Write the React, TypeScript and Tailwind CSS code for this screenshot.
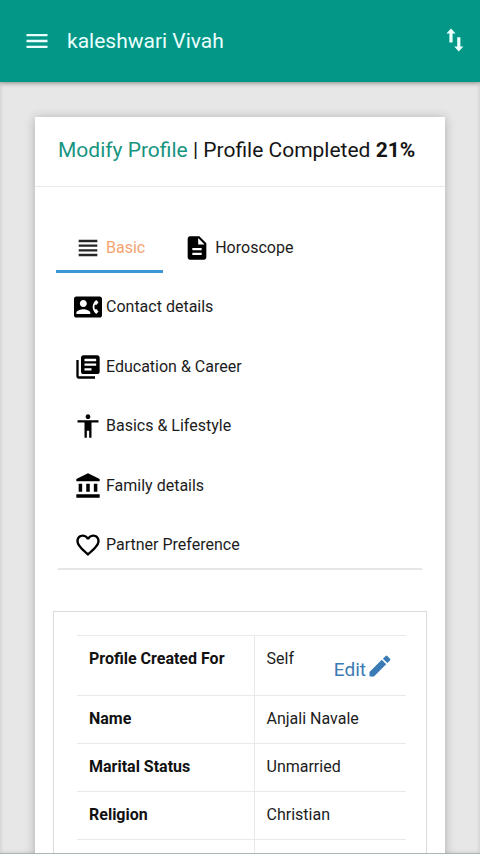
import React from 'react';
import clsx from 'clsx';
import type { IconType } from 'react-icons';
import {
  MdAccessibility,
  MdAccountBalance,
  MdContactPhone,
  MdDescription,
  MdFavoriteBorder,
  MdLibraryBooks,
  MdMenu,
  MdViewHeadline,
} from 'react-icons/md';

type Tab = {
  label: string;
  icon: IconType;
};

const tabs: Tab[] = [
  { label: 'Basic', icon: MdViewHeadline },
  { label: 'Horoscope', icon: MdDescription },
  { label: 'Contact details', icon: MdContactPhone },
  { label: 'Education & Career', icon: MdLibraryBooks },
  { label: 'Basics & Lifestyle', icon: MdAccessibility },
  { label: 'Family details', icon: MdAccountBalance },
  { label: 'Partner Preference', icon: MdFavoriteBorder },
];

const details = [
  { label: 'Profile Created For', value: 'Self', editable: true },
  { label: 'Name', value: 'Anjali Navale' },
  { label: 'Marital Status', value: 'Unmarried' },
  { label: 'Religion', value: 'Christian' },
  { label: '', value: '' },
];

function SortIcon() {
  return (
    <svg width="18" height="24" viewBox="0 0 18 24" fill="currentColor">
      <path d="M5 .5 9.6 5.6H6.6V14.4H3.4V5.6H.4z" />
      <path d="M12.8 23.5 8.2 18.4H11.2V9.2H14.4V18.4H17.4z" />
    </svg>
  );
}

function PencilIcon() {
  return (
    <svg width="28" height="28" viewBox="0 0 24 24" fill="currentColor">
      <path d="M3 17.2V20.4q0 .6.6.6H6.8L17.3 10.5 13.5 6.7z" />
      <path d="M18.3 9.5 20.6 7.2q.7-.7 0-1.4L18.2 3.4q-.7-.7-1.4 0L14.5 5.7z" />
    </svg>
  );
}

function AppBar() {
  return (
    <header className="z-10 flex h-[82px] shrink-0 items-center bg-[#039788] pr-4 pl-[23px] text-[#e9fffc] shadow-[0_1px_5px_rgba(0,0,0,0.35)]">
      <button type="button" aria-label="Open menu">
        <MdMenu size={28} />
      </button>
      <h1 className="ml-4 flex-1 text-[21px] leading-7">kaleshwari Vivah</h1>
      <button type="button" aria-label="Sort" className="pb-0.5">
        <SortIcon />
      </button>
    </header>
  );
}

function ProfileTabs() {
  return (
    <nav className="mx-[23px] mt-[26px] border-b-2 border-[#e6e6e6]">
      <ul className="-mx-0.5 -mb-0.5 flex h-[357px] flex-wrap items-end gap-x-0.5 pr-10">
        {tabs.map(({ label, icon: Icon }, index) => (
          <li key={label}>
            <a
              href="#"
              aria-current={index === 0 ? 'page' : undefined}
              className={clsx(
                'flex items-center gap-1 border-b-3 px-[18px] pb-2 text-base leading-7',
                index === 0
                  ? 'border-[#3d97d6] text-[#f4a373]'
                  : 'border-transparent text-[#1c1c1c]',
              )}
            >
              <Icon
                size={28}
                className={index === 0 ? 'text-[#262626]' : 'text-black'}
              />
              {label}
            </a>
          </li>
        ))}
      </ul>
    </nav>
  );
}

function DetailsTable() {
  return (
    <div className="mx-[18px] mt-[41px] border border-[#d9dcdb] py-[23px] pr-5 pl-[23px]">
      <table className="w-full border-collapse text-left text-base leading-6 text-[#1c1c1c]">
        <tbody>
          {details.map(({ label, value, editable }, index) => (
            <tr
              key={index}
              className={clsx(
                'border-t border-[#e9e9e9] align-top',
                editable ? 'h-[60px]' : 'h-12',
              )}
            >
              <th
                scope="row"
                className="w-[177px] border-r border-[#e9e9e9] px-3 pt-[11px] font-bold text-[#111]"
              >
                {label}
              </th>
              <td className="px-3 pt-[11px]">
                <div className="flex justify-between">
                  {value}
                  {editable && (
                    <a
                      href="#"
                      className="mt-[3px] flex h-8 items-center text-[19px] text-[#3a7ab5]"
                    >
                      <span className="pt-2">Edit</span>
                      <PencilIcon />
                    </a>
                  )}
                </div>
              </td>
            </tr>
          ))}
        </tbody>
      </table>
    </div>
  );
}

export default function App() {
  return (
    <div className="flex h-screen flex-col border-b border-[#a9b7b5] bg-[#e7e7e7] font-['Roboto',sans-serif]">
      <AppBar />
      <main className="flex-1 overflow-y-auto px-[35px] pt-[35px] shadow-[inset_0_0_4px_rgba(0,0,0,0.15)] [scrollbar-width:none]">
        <section className="bg-white pb-10 shadow-[0_1px_10px_rgba(0,0,0,0.25)]">
          <h2 className="border-b border-[#e9e9e9] px-[23px] pt-[17px] pb-5 text-[21px] leading-8 text-[#151515]">
            <a href="#" className="text-[#17947f]">
              Modify Profile
            </a>{' '}
            | Profile Completed <b>21%</b>
          </h2>
          <ProfileTabs />
          <DetailsTable />
        </section>
      </main>
    </div>
  );
}
